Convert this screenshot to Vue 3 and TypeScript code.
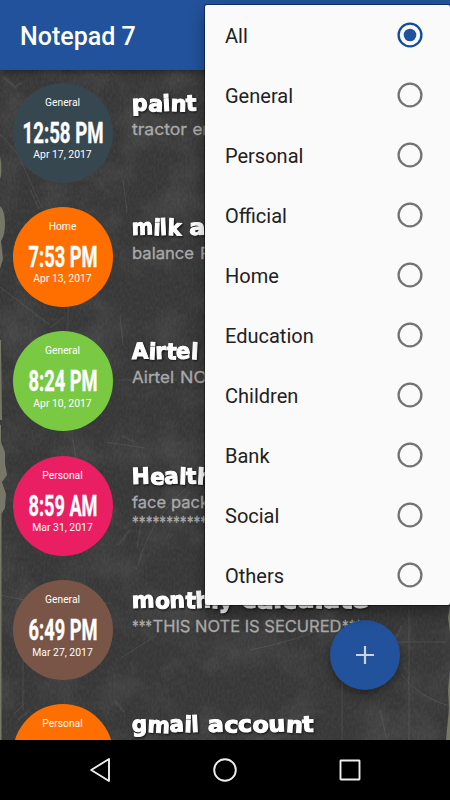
<script setup lang="ts">
import { ref } from 'vue'

interface Word {
  text: string
  x: number
  width: number
}

interface Note {
  category: string
  time?: string
  timeWidth?: number
  date?: string
  color: string
  title: Word[]
  lines: Word[]
}

const notes: Note[] = [
  {
    category: 'General', time: '12:58 PM', timeWidth: 81, date: 'Apr 17, 2017', color: '#37474f',
    title: [{ text: 'paint', x: 0, width: 65 }],
    lines: [{ text: 'tractor', x: 0, width: 55 }, { text: 'en', x: 60.5, width: 20 }],
  },
  {
    category: 'Home', time: '7:53 PM', timeWidth: 69, date: 'Apr 13, 2017', color: '#ff6f00',
    title: [{ text: 'milk', x: 0, width: 49 }, { text: 'a', x: 57.5, width: 16 }],
    lines: [{ text: 'balance', x: 0, width: 62 }, { text: 'P', x: 68, width: 11 }],
  },
  {
    category: 'General', time: '8:24 PM', timeWidth: 69, date: 'Apr 10, 2017', color: '#7ac943',
    title: [{ text: 'Airtel', x: 0, width: 66 }],
    lines: [{ text: 'Airtel', x: 0, width: 42 }, { text: 'NO', x: 48, width: 27 }],
  },
  {
    category: 'Personal', time: '8:59 AM', timeWidth: 69, date: 'Mar 31, 2017', color: '#e91e63',
    title: [{ text: 'Health', x: 0, width: 80 }],
    lines: [{ text: 'face', x: 0, width: 34 }, { text: 'pack', x: 39, width: 38 }, { text: '************', x: 0, width: 82 }],
  },
  {
    category: 'General', time: '6:49 PM', timeWidth: 69, date: 'Mar 27, 2017', color: '#795548',
    title: [{ text: 'monthly', x: 0, width: 101 }, { text: 'calculate', x: 110, width: 127 }],
    lines: [{ text: '***', x: 0, width: 20 }, { text: 'THIS NOTE IS SECURED', x: 20.5, width: 189 }, { text: '***', x: 210, width: 20 }],
  },
  {
    category: 'Personal', color: '#ff6f00',
    title: [{ text: 'gmail', x: 0, width: 67 }, { text: 'account', x: 76, width: 106 }],
    lines: [],
  },
]

const categories = ['All', 'General', 'Personal', 'Official', 'Home', 'Education', 'Children', 'Bank', 'Social', 'Others']
const selected = ref('All')
</script>

<template>
  <div class="screen">
    <header class="bar">Notepad 7</header>
    <main class="board">
      <svg class="texture" viewBox="0 0 450 670" aria-hidden="true">
        <defs>
          <filter id="grain" x="0" y="0" width="100%" height="100%">
            <feTurbulence type="fractalNoise" baseFrequency="0.5 0.25" numOctaves="3" seed="8" />
            <feColorMatrix values="0 0 0 0 1  0 0 0 0 1  0 0 0 0 1  .5 0 0 0 -.15" />
          </filter>
          <filter id="cloud" x="0" y="0" width="100%" height="100%">
            <feTurbulence type="fractalNoise" baseFrequency="0.025" numOctaves="4" seed="3" />
            <feColorMatrix values="0 0 0 0 1  0 0 0 0 1  0 0 0 0 1  .2 0 0 0 -.085" />
          </filter>
        </defs>
        <rect width="450" height="670" fill="#373737" />
        <rect width="450" height="670" filter="url(#cloud)" opacity=".8" />
        <rect width="450" height="670" filter="url(#grain)" opacity=".18" />
        <g class="scratches">
          <path d="M0 64L18 84 42 138M30 119l9 20M68 236v24M0 217l50 38M50 258l14-11M73 370l3 18M23 588v52M0 525l60 12 50-4M24 634l-10 10M121 588l34-22M142 448l-5 30M190 415q-38 30-52 80M117 310h60M123 110l4 32M120 245l3 30M409 540v130M342 590v80M250 580q50-10 80-25M401 604q20 25 49 32M396 572h50M380 640l7 30M105 372l40 6" />
          <path class="smudge" d="M3 7l12 10 6-4M18 650l12-10M130 460l-12 15M190 422l-16 16M396 568l6-12M85 549l12 8M115 630l9 12M122 366l12 6" />
        </g>
        <path class="torn" d="M0 86q2 8 1 20l-1 3zM0 136q5 5 5 17t-4 18l2 18-3 10zM0 270h1l1 80h-2zM0 355h1v17l4 10v11l2 12-5 7 4 12-1 14-5 8zM0 440h1.5v230h-1.5zM450 536l-2 12 2 14zM450 600l-2 20 1 18-3 32h4z" />
      </svg>
      <article v-for="(note, index) in notes" :key="index" class="row">
        <div class="badge" :style="{ backgroundColor: note.color }">
          <span class="small">{{ note.category }}</span>
          <svg v-if="note.time" class="time" viewBox="0 0 100 28">
            <text x="50" y="25" text-anchor="middle" :textLength="note.timeWidth" lengthAdjust="spacingAndGlyphs">{{ note.time }}</text>
          </svg>
          <span v-if="note.date" class="small date">{{ note.date }}</span>
        </div>
        <svg class="copy" viewBox="0 0 310 90">
          <text v-for="word in note.title" :key="word.text" class="title" :x="word.x" y="28" rotate="-2 3 -3 2 -3 3 -2 2 -3" :textLength="word.width" lengthAdjust="spacingAndGlyphs">{{ word.text }}</text>
          <text v-for="word in note.lines" :key="word.x + word.text" class="line" :x="word.x" :y="word.text.startsWith('****') ? 72 : 52" :textLength="word.width" lengthAdjust="spacingAndGlyphs">{{ word.text }}</text>
        </svg>
      </article>
    </main>
    <nav class="system">
      <svg viewBox="0 0 450 60" aria-label="System navigation">
        <path d="M91.2 30L109 19v22z" />
        <circle cx="225" cy="30" r="10.8" />
        <rect x="340.5" y="20.5" width="19" height="19" rx=".5" />
      </svg>
    </nav>
    <button class="fab" aria-label="Add note">
      <svg viewBox="0 0 18 18"><path d="M9 0v18M0 9h18" /></svg>
    </button>
    <div class="menu" role="radiogroup">
      <div v-for="item in categories" :key="item" class="option" role="radio" :aria-checked="selected === item" @click="selected = item">
        <span>{{ item }}</span>
        <svg class="radio" :class="{ active: selected === item }" viewBox="0 0 26 26">
          <circle class="ring" cx="13" cy="13" r="11.4" />
          <circle v-if="selected === item" class="dot" cx="13" cy="13" r="6.3" />
        </svg>
      </div>
    </div>
  </div>
</template>

<style>
body { margin: 0; background: #000; }
</style>

<style scoped>
.screen {
  position: relative;
  display: flex;
  flex-direction: column;
  width: 450px;
  height: 800px;
  overflow: hidden;
  font-family: Roboto, sans-serif;
}
.bar {
  position: relative;
  z-index: 1;
  box-sizing: border-box;
  height: 70px;
  padding: 4px 20px 0;
  line-height: 66px;
  font-size: 25px;
  font-weight: 500;
  color: #fff;
  background: #22529b;
  box-shadow: 0 2px 6px rgba(0, 0, 0, .4);
}
.board {
  position: relative;
  box-sizing: border-box;
  height: 670px;
  padding-top: 12.5px;
  overflow: hidden;
  background: #393939;
}
.texture { position: absolute; top: 0; left: 0; width: 450px; height: 670px; }
.scratches { fill: none; stroke: #aaa; stroke-width: 1; opacity: .15; }
.smudge { stroke-width: 2.5; opacity: .6; }
.torn { fill: #777768; }
.row { position: relative; display: flex; gap: 19.5px; height: 124.4px; padding-left: 12.5px; }
.badge {
  display: flex;
  flex-direction: column;
  align-items: center;
  box-sizing: border-box;
  flex: none;
  width: 100px;
  height: 100px;
  padding-top: 14px;
  border-radius: 50%;
  color: #fff;
}
.small { font-size: 10.3px; line-height: 12px; }
.date { font-size: 10.1px; margin-top: 3.5px; }
.time { width: 100px; height: 28px; margin-top: 9px; overflow: visible; }
.time text { font-size: 29px; font-weight: 700; fill: #fff; stroke: #fff; stroke-width: .4; }
.copy { width: 310px; height: 90px; flex: none; overflow: visible; }
.title {
  font: 700 22px "DejaVu Sans", sans-serif;
  fill: #fff;
  stroke: #fff;
  stroke-width: 1.1;
  filter: drop-shadow(1px 1px 1px #111);
}
.line { font: 400 16.4px Inter, sans-serif; fill: #aaa; stroke: #aaa; stroke-width: .3; }
.system { height: 60px; background: #000; }
.system svg { display: block; width: 450px; height: 60px; fill: none; stroke: #eee; stroke-width: 1.9; stroke-linejoin: round; }
.fab {
  position: absolute;
  top: 620px;
  left: 330px;
  display: flex;
  align-items: center;
  justify-content: center;
  width: 70px;
  height: 70px;
  padding: 0;
  border: 0;
  border-radius: 50%;
  background: #22529b;
  box-shadow: 0 5px 9px rgba(0, 0, 0, .35);
}
.fab svg { width: 18px; height: 18px; fill: none; stroke: #c8d4e6; stroke-width: 2.2; }
.date { font-size: 10.4px; }
.menu {
  position: absolute;
  z-index: 2;
  top: 5px;
  left: 205px;
  width: 245px;
  height: 600px;
  border-radius: 2px;
  background: #fafafa;
  box-shadow: 0 0 0 1px rgba(0, 0, 0, .4), 0 8px 16px rgba(0, 0, 0, .35);
}
.option {
  display: flex;
  align-items: center;
  justify-content: space-between;
  box-sizing: border-box;
  height: 60px;
  padding: 1px 27px 0 20px;
  font-size: 20px;
  color: #212121;
}
.radio { width: 26px; height: 26px; margin-top: -1px; fill: none; stroke: #737373; stroke-width: 2.3; }
.active { stroke: #114b9c; }
.dot { fill: #22529b; stroke: none; }
</style>
